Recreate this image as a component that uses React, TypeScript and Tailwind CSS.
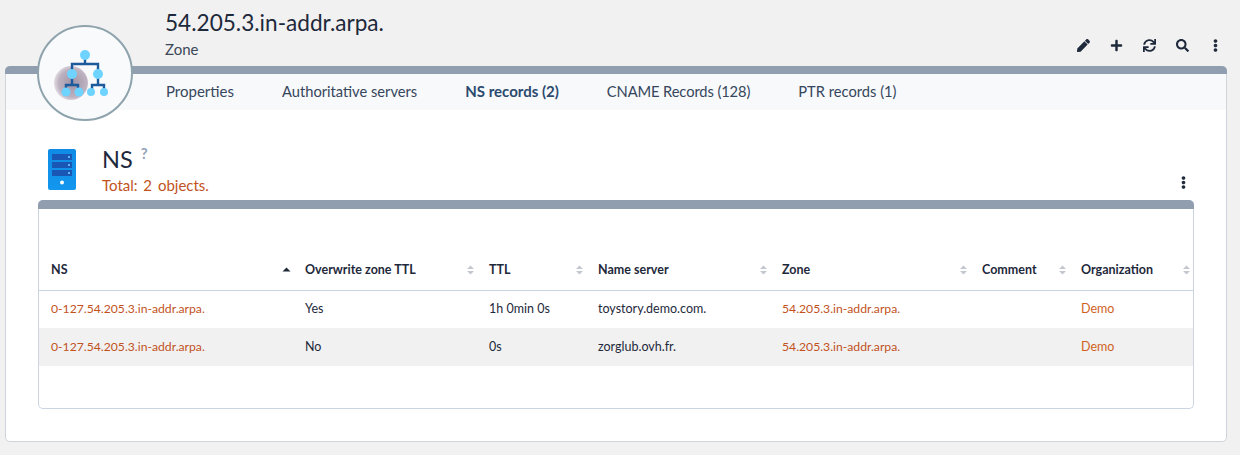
import React from "react";
import { FaPen, FaPlus, FaSync, FaSearch, FaEllipsisV } from "react-icons/fa";

const tabs = [
	{ label: "Properties", style: "text-[15px]" },
	{ label: "Authoritative servers", style: "" },
	{ label: "NS records (2)", style: "text-[15px] font-bold text-[#2c4a6e]" },
	{ label: "CNAME Records (128)", style: "tracking-[-0.1px]" },
	{ label: "PTR records (1)", style: "" },
];

const columns = [
	{ label: "NS", width: "w-[254px]", sorted: true },
	{ label: "Overwrite zone TTL", width: "w-[184px]", sorted: false },
	{ label: "TTL", width: "w-[109px]", sorted: false },
	{ label: "Name server", width: "w-[184px]", sorted: false },
	{ label: "Zone", width: "w-[200px]", sorted: false },
	{ label: "Comment", width: "w-[99px]", sorted: false },
	{ label: "Organization", width: "w-[124px]", sorted: false },
];

const rows = [
	["0-127.54.205.3.in-addr.arpa.", "Yes", "1h 0min 0s", "toystory.demo.com.", "54.205.3.in-addr.arpa.", "", "Demo"],
	["0-127.54.205.3.in-addr.arpa.", "No", "0s", "zorglub.ovh.fr.", "54.205.3.in-addr.arpa.", "", "Demo"],
];

function SortIcon({ sorted }: { sorted: boolean }) {
	return (
		<svg width="9" height="12" viewBox="0 0 9 12" className="shrink-0">
			{sorted ? (
				<path d="M4.5 3.5 L8.5 7.5 L0.5 7.5 Z" fill="#1f2937" />
			) : (
				<>
					<path d="M4.5 1.5 L8 5 L1 5 Z" fill="#c3c8d0" />
					<path d="M4.5 10.5 L8 7 L1 7 Z" fill="#c3c8d0" />
				</>
			)}
		</svg>
	);
}

function ZoneLogo() {
	return (
		<svg width="72" height="60" viewBox="0 0 72 60">
			<defs>
				<radialGradient id="ball" cx="0.55" cy="0.5" r="0.55">
					<stop offset="0" stopColor="#9f93a6" />
					<stop offset="0.75" stopColor="#bdb2c0" />
					<stop offset="1" stopColor="#e2dde4" />
				</radialGradient>
			</defs>
			<circle cx="22" cy="40" r="17" fill="url(#ball)" />
			<g stroke="#1d5a9c" strokeWidth="2.4" fill="none">
				<path d="M36 14 V21 M23 28 V21 H49 V28" />
				<path d="M23 34 V42 M17 48 V42 H29 V48" />
				<path d="M49 34 V42 M43 48 V42 H55 V48" />
			</g>
			<g fill="#6fd3ff">
				<circle cx="36" cy="12" r="5" />
				<circle cx="23" cy="31" r="5" />
				<circle cx="49" cy="31" r="5" />
				<circle cx="17" cy="49" r="4.5" />
				<circle cx="30" cy="49" r="4.5" />
				<circle cx="42" cy="49" r="4" />
				<circle cx="55" cy="49" r="4" />
			</g>
		</svg>
	);
}

function ServerIcon() {
	return (
		<svg width="28" height="41" viewBox="0 0 28 41">
			<defs>
				<linearGradient id="srv" x1="0" y1="0" x2="0" y2="1">
					<stop offset="0" stopColor="#0f8be6" />
					<stop offset="1" stopColor="#1296ee" />
				</linearGradient>
			</defs>
			<rect width="28" height="41" rx="2" fill="url(#srv)" />
			<rect x="4" y="5" width="20" height="6" fill="#1a57b4" />
			<rect x="4" y="13" width="20" height="6" fill="#1a57b4" />
			<rect x="4" y="21" width="20" height="6" fill="#1a57b4" />
			<rect x="20" y="7" width="2" height="2" fill="#5cb8f2" />
			<rect x="20" y="15" width="2" height="2" fill="#5cb8f2" />
			<rect x="20" y="23" width="2" height="2" fill="#5cb8f2" />
			<circle cx="14" cy="33.5" r="2" fill="#ffffff" />
		</svg>
	);
}

export default function App() {
	return (
		<div className="w-[1240px] h-[455px] overflow-hidden bg-[#f1f1f1] pl-[5px] pr-[13px] text-[#1e293b] font-['Lato','Open_Sans',sans-serif]">
			{/* page heading */}
			<div className="h-[66px] flex justify-between">
				<div className="pl-[160px] pt-[9px]">
					<h1 className="text-[22.6px] leading-[28px]">54.205.3.in-addr.arpa.</h1>
					<p className="mt-[2px] text-[15px] leading-[20px] text-[#3c4858]">Zone</p>
				</div>
				<div className="flex items-center gap-[20px] pt-[25px] pr-[5px] text-[13px] h-[66px]">
					<FaPen />
					<FaPlus />
					<FaSync />
					<FaSearch />
					<FaEllipsisV />
				</div>
			</div>

			<div className="relative h-[376px] rounded-[5px] border border-t-0 border-[#cfd5dd] bg-white">
				<div className="h-[8px] -mx-px bg-[#919eb0] rounded-t-[5px]" />

				{/* zone badge */}
				<div className="absolute left-[31px] top-[-41px] w-[96px] h-[96px] rounded-full border-2 border-[#8fa3ad] bg-[#f8fafc] flex items-center justify-center">
					<ZoneLogo />
				</div>

				<nav className="h-[36px] bg-[#f7f9fb] pl-[160px] pb-[2px] flex items-center gap-[48px] text-[14.7px] text-[#36465c]">
					{tabs.map((tab) => (
						<span key={tab.label} className={tab.style}>
							{tab.label}
						</span>
					))}
				</nav>

				<div className="px-[32px] pt-[35px]">
					<div className="h-[55px] flex">
						<div className="ml-[10px] mt-[4px]">
							<ServerIcon />
						</div>
						<div className="ml-[26px]">
							<div className="flex items-start">
								<span className="text-[23.5px] leading-[28px]">NS</span>
								<span className="ml-[8px] text-[15px] leading-[16px] font-bold text-[#94a3b8]">?</span>
							</div>
							<p className="mt-[3px] text-[15px] leading-[18px] text-[#c2521d] [word-spacing:2px]">Total: 2 objects.</p>
						</div>
						<div className="ml-auto mr-[4px] mt-[31px] text-[13px]">
							<FaEllipsisV />
						</div>
					</div>

					<div className="h-[209px] rounded-[5px] border border-t-0 border-[#cbd5e1] bg-white">
						<div className="h-[9px] -mx-px bg-[#919eb0] rounded-t-[5px]" />
						<table className="mt-[42px] w-[1154px] table-fixed border-collapse text-[12.5px]">
							<thead>
								<tr className="h-[39px] border-b border-[#cbd5e1]">
									{columns.map((col) => (
										<th key={col.label} className={`${col.width} pl-[12px] pr-[2px] text-left font-bold`}>
											<div className="flex items-center justify-between">
												<span>{col.label}</span>
												<SortIcon sorted={col.sorted} />
											</div>
										</th>
									))}
								</tr>
							</thead>
							<tbody>
								{rows.map((row, i) => (
									<tr key={i} className={i % 2 === 1 ? "h-[38px] bg-[#f1f1f1]" : "h-[38px]"}>
										{row.map((cell, j) => (
											<td
												key={j}
												className={`pl-[12px] ${j === 0 || j === 4 ? "text-[12.2px] text-[#c2521d]" : j === 6 ? "text-[#d0621c]" : ""}`}
											>
												{cell}
											</td>
										))}
									</tr>
								))}
							</tbody>
						</table>
					</div>
				</div>
			</div>
		</div>
	);
}
